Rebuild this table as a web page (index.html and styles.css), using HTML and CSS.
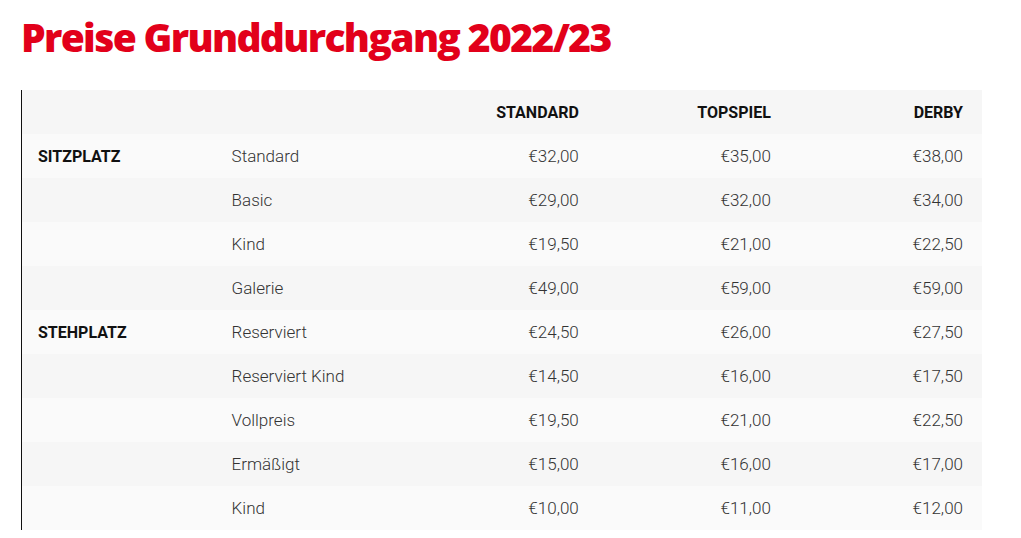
FILE: index.html
```html
<!DOCTYPE html>
<html lang="de">
<head>
<meta charset="utf-8">
<title>Preise Grunddurchgang 2022/23</title>
<link rel="stylesheet" href="styles.css">
</head>
<body>
<h1 class="title">Preise Grunddurchgang 2022/23</h1>
<table class="prices">
  <thead>
    <tr><th></th><th></th><th class="num">STANDARD</th><th class="num">TOPSPIEL</th><th class="num">DERBY</th></tr>
  </thead>
  <tbody>
    <tr><th class="cat">SITZPLATZ</th><td class="sub">Standard</td><td class="num">€32,00</td><td class="num">€35,00</td><td class="num">€38,00</td></tr>
    <tr><th class="cat"></th><td class="sub">Basic</td><td class="num">€29,00</td><td class="num">€32,00</td><td class="num">€34,00</td></tr>
    <tr><th class="cat"></th><td class="sub">Kind</td><td class="num">€19,50</td><td class="num">€21,00</td><td class="num">€22,50</td></tr>
    <tr><th class="cat"></th><td class="sub">Galerie</td><td class="num">€49,00</td><td class="num">€59,00</td><td class="num">€59,00</td></tr>
    <tr><th class="cat">STEHPLATZ</th><td class="sub">Reserviert</td><td class="num">€24,50</td><td class="num">€26,00</td><td class="num">€27,50</td></tr>
    <tr><th class="cat"></th><td class="sub">Reserviert Kind</td><td class="num">€14,50</td><td class="num">€16,00</td><td class="num">€17,50</td></tr>
    <tr><th class="cat"></th><td class="sub">Vollpreis</td><td class="num">€19,50</td><td class="num">€21,00</td><td class="num">€22,50</td></tr>
    <tr><th class="cat"></th><td class="sub">Ermäßigt</td><td class="num">€15,00</td><td class="num">€16,00</td><td class="num">€17,00</td></tr>
    <tr><th class="cat"></th><td class="sub">Kind</td><td class="num">€10,00</td><td class="num">€11,00</td><td class="num">€12,00</td></tr>
  </tbody>
</table>
</body>
</html>
```
FILE: styles.css
```css
html, body {
  margin: 0;
  padding: 0;
  background: #ffffff;
}
body {
  padding: 0 0 0 21px;
  font-family: Roboto, "Liberation Sans", sans-serif;
  color: #222;
}
.title {
  margin: 0;
  padding-top: 14px;
  height: 90px;
  box-sizing: border-box;
  font-family: "Open Sans", Roboto, sans-serif;
  font-weight: 800;
  font-size: 39px;
  line-height: 46px;
  letter-spacing: -1.65px;
  color: #e2001a;
}
.prices {
  border-collapse: collapse;
  border-left: 1px solid #111;
  width: 961px;
  table-layout: fixed;
}
.prices th, .prices td {
  height: 44px;
  box-sizing: border-box;
  padding: 0 19px 0 16px;
  width: 192px;
  font-size: 17px;
  text-align: left;
  vertical-align: middle;
}
.prices th {
  font-weight: 700;
  font-size: 16px;
  color: #111;
}
.prices td {
  font-weight: 300;
  color: #333;
}
.prices .sub {
  padding-left: 18px;
}
.prices .num {
  text-align: right;
  padding-right: 19px;
}
.prices thead tr {
  background: #f6f6f6;
}
.prices tbody tr:nth-child(odd) {
  background: #fafafa;
}
.prices tbody tr:nth-child(even) {
  background: #f6f6f6;
}
```
